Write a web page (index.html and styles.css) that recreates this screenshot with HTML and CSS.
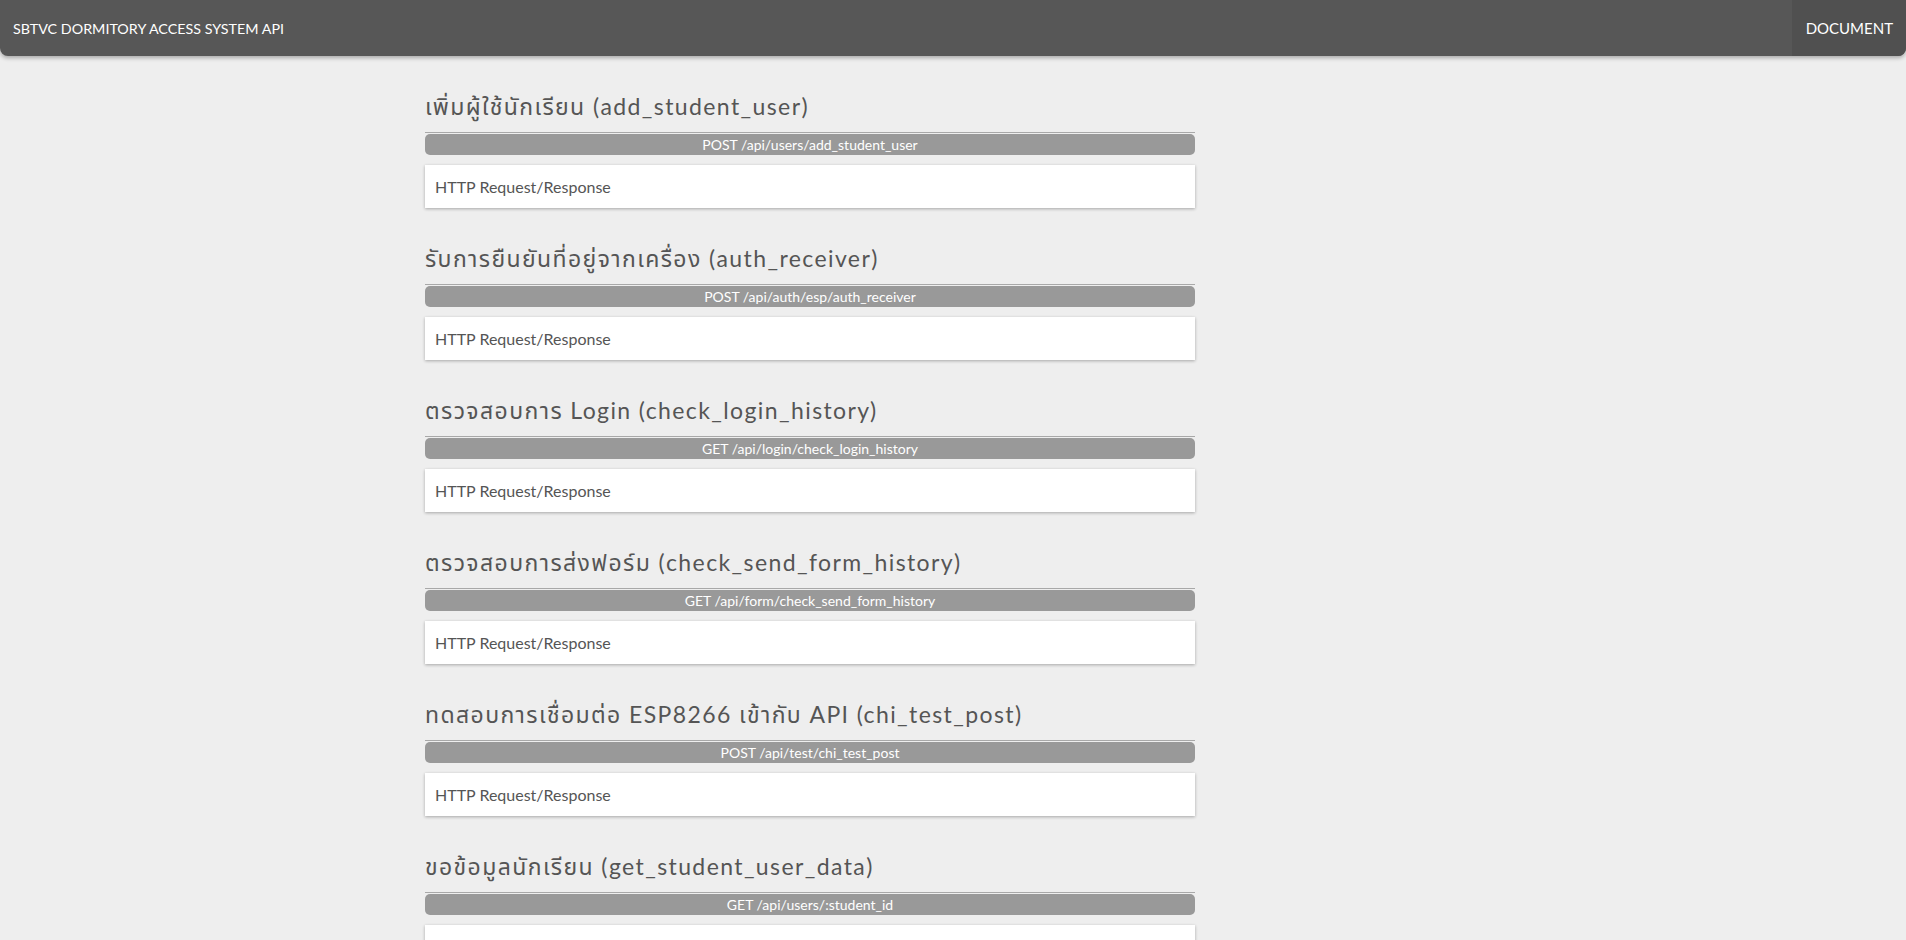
FILE: index.html
```html
<!DOCTYPE html>
<html lang="th">
  <head>
    <meta charset="UTF-8" />
    <meta name="viewport" content="width=device-width, initial-scale=1.0" />
    <title>SBTVC Dormitory Access System API</title>
    <link rel="stylesheet" href="styles.css">
  </head>
  <body>
    <nav class="topbar">
      <div class="brand">SBTVC DORMITORY ACCESS SYSTEM API</div>
      <a class="nav-link" href="#">DOCUMENT</a>
    </nav>

    <div class="main">
      <div class="api">
        <h2 class="api-title">เพิ่มผู้ใช้นักเรียน (add_student_user)</h2>
        <div class="endpoint">
          <div class="route">POST /api/users/add_student_user</div>
        </div>
        <div class="card">HTTP Request/Response</div>
      </div>

      <div class="api">
        <h2 class="api-title">รับการยืนยันที่อยู่จากเครื่อง (auth_receiver)</h2>
        <div class="endpoint">
          <div class="route">POST /api/auth/esp/auth_receiver</div>
        </div>
        <div class="card">HTTP Request/Response</div>
      </div>

      <div class="api">
        <h2 class="api-title">ตรวจสอบการ Login (check_login_history)</h2>
        <div class="endpoint">
          <div class="route">GET /api/login/check_login_history</div>
        </div>
        <div class="card">HTTP Request/Response</div>
      </div>

      <div class="api">
        <h2 class="api-title">ตรวจสอบการส่งฟอร์ม (check_send_form_history)</h2>
        <div class="endpoint">
          <div class="route">GET /api/form/check_send_form_history</div>
        </div>
        <div class="card">HTTP Request/Response</div>
      </div>

      <div class="api">
        <h2 class="api-title">ทดสอบการเชื่อมต่อ ESP8266 เข้ากับ API (chi_test_post)</h2>
        <div class="endpoint">
          <div class="route">POST /api/test/chi_test_post</div>
        </div>
        <div class="card">HTTP Request/Response</div>
      </div>

      <div class="api">
        <h2 class="api-title">ขอข้อมูลนักเรียน (get_student_user_data)</h2>
        <div class="endpoint">
          <div class="route">GET /api/users/:student_id</div>
        </div>
        <div class="card">HTTP Request/Response</div>
      </div>
    </div>
  </body>
</html>
```

FILE: styles.css
```css
html {
  background: #eeeeee;
}

body {
  margin: 0;
  background: #eeeeee;
  color: #555;
  font-family: Lato, "Noto Sans Thai", "Noto Sans", sans-serif;
}

::-webkit-scrollbar {
  width: 4px;
}

::-webkit-scrollbar-track {
  background: #eeeeee;
}

::-webkit-scrollbar-thumb {
  background: #c4c4c4;
  border-left: 2px solid #eeeeee;
}

.topbar {
  display: flex;
  justify-content: space-between;
  align-items: stretch;
  height: 56px;
  background: #575757;
  border-radius: 0 0 8px 8px;
  box-shadow: 0 2px 4px rgba(0, 0, 0, 0.3);
  overflow: hidden;
}

.brand {
  display: flex;
  align-items: center;
  padding-left: 13px;
  color: #fff;
  font-size: 14.3px;
}

.nav-link {
  display: flex;
  align-items: center;
  padding: 0 13px 0 14px;
  background: #505050;
  color: #fff;
  font-size: 15px;
  text-decoration: none;
}

.main {
  width: 770px;
  margin-left: 425px;
  padding-bottom: 40px;
}

.api-title {
  margin: 35px 0 11px;
  font-size: 23px;
  line-height: 30px;
  font-weight: normal;
  letter-spacing: 1.4px;
  color: #555;
}

.endpoint {
  border-top: 1px solid #a8a8a8;
  padding-top: 1px;
}

.route {
  height: 21px;
  line-height: 21px;
  background: #999;
  border-radius: 5px;
  color: #fff;
  font-size: 14px;
  text-align: center;
}

.card {
  margin-top: 10px;
  height: 43px;
  line-height: 43px;
  padding: 0 10px;
  background: #fff;
  box-shadow: 0 1px 3px rgba(0, 0, 0, 0.3);
  font-size: 16px;
  color: #555;
}
```
